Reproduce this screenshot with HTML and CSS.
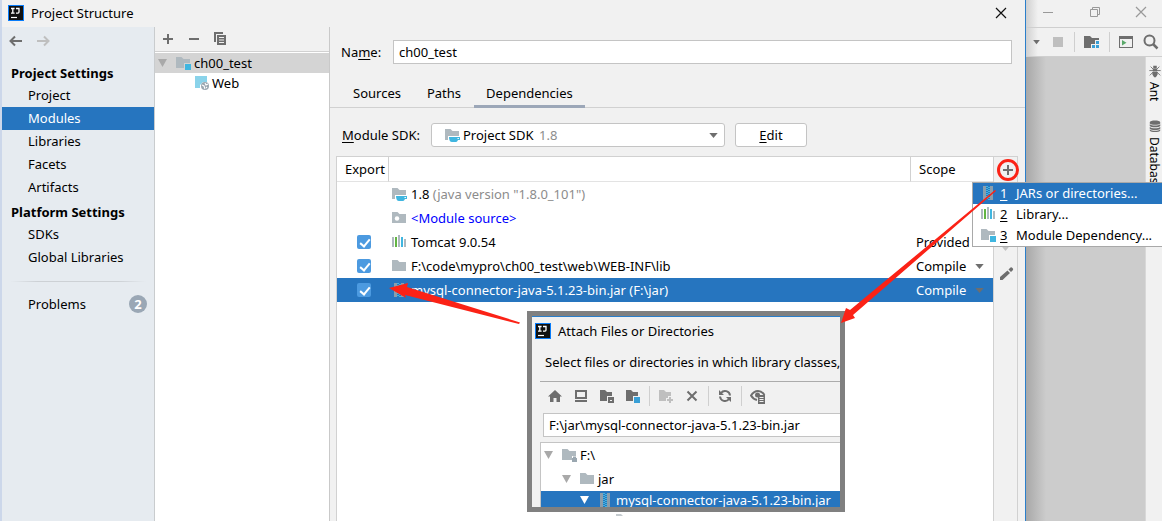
FILE: index.html
```
<!DOCTYPE html>
<html lang="en">
<head>
<meta charset="utf-8">
<title>Project Structure</title>
<link rel="stylesheet" href="styles.css">
</head>
<body>
<svg class="defs" aria-hidden="true">
  <symbol id="i-logo" viewBox="0 0 16 16"><rect width="16" height="16" fill="#087cfa"/><rect x="1" y="1" width="14" height="14" fill="#111"/><path d="M3 3.5h3.6M4.8 3.5v4.6M3 8.1h3.6M8 3.5h3v3.6q0 1-1 1H8" fill="none" stroke="#fff" stroke-width="1.3"/><path d="M3 12.5h6" stroke="#fff" stroke-width="1.2"/></symbol>
  <symbol id="i-folder" viewBox="0 0 16 16"><path d="M1 2h5.5l2 2H15v9H1z"/></symbol>
  <symbol id="i-module" viewBox="0 0 16 16"><path d="M1 2h5.5l2 2H15v4H9v5H1z"/><path d="M10 9h6v6h-6z" fill="#40b6e0"/></symbol>
  <symbol id="i-sdk" viewBox="0 0 16 16"><path d="M1 2h5.5l2 2H15v5H4v4H1z"/><path d="M5 10h11v3h-2c-1 2-2 2-2 2H8c-2 0-3-2-3-5z" fill="#40b6e0"/><path d="M13.5 11h1.4v1h-1.4z" fill="#fff"/></symbol>
  <symbol id="i-source" viewBox="0 0 16 16"><path d="M1 2h5.5l2 2H15v9H1z"/><circle cx="6" cy="8.5" r="2.2" fill="#fff"/></symbol>
  <symbol id="i-drive" viewBox="0 0 16 16"><path d="M1 2h5.5l2 2H15v5h-4v4H1z"/><path d="M11 11h5v4h-5zM12 11v-1.5h3V11" fill="#9aa7b0"/></symbol>
  <symbol id="i-lib" viewBox="0 0 16 16"><path d="M1 3h2v10H1zM7 1h2v12H7zM13 5h2v8h-2z"/><path d="M4 3h2v10H4z" fill="#62b543"/><path d="M10 3h2v10h-2z" fill="#40b6e0"/></symbol>
  <symbol id="i-jar" viewBox="0 0 16 16"><path d="M3 1h3v14H3zM10 1h3v14h-3z" fill="#8a9dac"/><path d="M6 1h2v1H6zM8 2h2v1H8zM6 3h2v1H6zM8 4h2v1H8zM6 5h2v1H6zM8 6h2v1H8zM6 7h2v1H6zM8 8h2v1H8zM6 9h2v1H6zM8 10h2v1H8zM6 11h2v1H6zM8 12h2v1H8zM6 13h2v1H6zM8 14h2v1H8z" fill="#40b6e0"/></symbol>
  <symbol id="i-web" viewBox="0 0 16 16"><path d="M1 1h12v6H9L6 10v3H1z" fill="#8ad3ea"/><circle cx="11" cy="11" r="4" fill="#9aa7b0"/><path d="M8 10l2 1 1 3M11 8l1 2 2-1M13 12l-1 1" stroke="#fff" stroke-width="1.1" fill="none"/></symbol>
  <symbol id="i-plus" viewBox="0 0 16 16"><path d="M7 3h2v4h4v2H9v4H7V9H3V7h4z"/></symbol>
  <symbol id="i-minus" viewBox="0 0 16 16"><path d="M3 7h10v2H3z"/></symbol>
  <symbol id="i-copy" viewBox="0 0 16 16"><path d="M2 1h9v2H4v8H2z"/><path fill-rule="evenodd" d="M5 4h9v10H5zM7 6v1h5V6zM7 8.5v1h5v-1zM7 11v1h5v-1z"/></symbol>
  <symbol id="i-back" viewBox="0 0 16 16"><path d="M14 8H3M7 3.5L2.500 8L7 12.500" fill="none" stroke="currentColor" stroke-width="2"/></symbol>
  <symbol id="i-fwd" viewBox="0 0 16 16"><path d="M2 8h11M9 3.500L13.500 8L9 12.500" fill="none" stroke="currentColor" stroke-width="2"/></symbol>
  <symbol id="i-tri" viewBox="0 0 10 10"><path d="M0 1h9L4.500 9z"/></symbol>
  <symbol id="i-close" viewBox="0 0 16 16"><path d="M3 3l10 10M13 3L3 13" fill="none" stroke="currentColor" stroke-width="1.200"/></symbol>
  <symbol id="i-pencil" viewBox="0 0 16 16"><path d="M2 11L9.500 4.500l2.500 2.500L4.500 14H2zM10.500 3.500L12.500 1.500q1-.5 2 .5t.5 2L13 6z"/></symbol>
</svg>

<div class="page">
  <section class="dialog" aria-label="Project Structure">
    <header class="titlebar">
      <svg class="icon"><use href="#i-logo"/></svg>
      <h1 class="title">Project Structure</h1>
      <button class="tool close" aria-label="Close"><svg class="icon"><use href="#i-close"/></svg></button>
    </header>
    <div class="body">
      <nav class="sidebar">
        <div class="history">
          <button class="tool" aria-label="Back"><svg class="icon"><use href="#i-back"/></svg></button>
          <button class="tool off" aria-label="Forward" disabled><svg class="icon"><use href="#i-fwd"/></svg></button>
        </div>
        <h2 class="group">Project Settings</h2>
        <a class="item" href="#">Project</a>
        <a class="item current" href="#" aria-current="page">Modules</a>
        <a class="item" href="#">Libraries</a>
        <a class="item" href="#">Facets</a>
        <a class="item" href="#">Artifacts</a>
        <h2 class="group">Platform Settings</h2>
        <a class="item" href="#">SDKs</a>
        <a class="item" href="#">Global Libraries</a>
        <hr class="rule">
        <a class="item" href="#">Problems<span class="count">2</span></a>
      </nav>

      <div class="modules">
        <div class="tree-tools">
          <button class="tool" aria-label="Add"><svg class="icon"><use href="#i-plus"/></svg></button>
          <button class="tool" aria-label="Remove"><svg class="icon"><use href="#i-minus"/></svg></button>
          <button class="tool" aria-label="Copy"><svg class="icon"><use href="#i-copy"/></svg></button>
        </div>
        <ul class="tree">
          <li class="node picked"><svg class="tri"><use href="#i-tri"/></svg><svg class="icon soft"><use href="#i-module"/></svg>ch00_test</li>
          <li class="node child"><svg class="icon soft"><use href="#i-web"/></svg>Web</li>
        </ul>
      </div>

      <main class="editor">
        <div class="name-row">
          <label class="name-label" for="name">Na<u>m</u>e:</label>
          <input class="field" id="name" type="text" value="ch00_test">
        </div>
        <div class="tabs" role="tablist">
          <button class="tab" role="tab">Sources</button>
          <button class="tab" role="tab">Paths</button>
          <button class="tab active" role="tab" aria-selected="true">Dependencies</button>
        </div>
        <div class="sdk-row">
          <label class="sdk-label" for="sdk"><u>M</u>odule SDK:</label>
          <div class="combo">
            <select class="combo-select" id="sdk"><option>Project SDK</option></select>
            <span class="combo-face"><svg class="icon soft"><use href="#i-sdk"/></svg><span class="version">1.8</span><svg class="caret" viewBox="0 0 10 6"><path d="M0 0h10L5 6z"/></svg></span>
          </div>
          <button class="edit"><u>E</u>dit</button>
        </div>

        <div class="deps">
          <div class="deps-list">
            <table class="table">
              <colgroup><col class="c-export"><col><col class="c-scope"></colgroup>
              <thead><tr><th scope="col">Export</th><th scope="col" aria-label="Dependency"></th><th scope="col">Scope</th></tr></thead>
              <tbody>
                <tr><td></td><td><div class="dep"><svg class="icon soft"><use href="#i-sdk"/></svg><span>1.8 <span class="dim">(java version "1.8.0_101")</span></span></div></td><td></td></tr>
                <tr><td></td><td><div class="dep"><svg class="icon soft"><use href="#i-source"/></svg><span class="own">&lt;Module source&gt;</span></div></td><td></td></tr>
                <tr><td><input class="check" type="checkbox" checked aria-label="Export Tomcat"></td><td><div class="dep"><svg class="icon soft"><use href="#i-lib"/></svg>Tomcat 9.0.54</div></td><td><select class="scope" aria-label="Scope of Tomcat"><option>Provided</option></select></td></tr>
                <tr><td><input class="check" type="checkbox" checked aria-label="Export lib"></td><td><div class="dep"><svg class="icon soft"><use href="#i-folder"/></svg>F:\code\mypro\ch00_test\web\WEB-INF\lib</div></td><td><div class="scope-cell"><select class="scope" aria-label="Scope of lib"><option>Compile</option></select><svg class="caret" viewBox="0 0 10 6"><path d="M0 0h10L5 6z"/></svg></div></td></tr>
                <tr class="selected"><td><input class="check" type="checkbox" checked aria-label="Export mysql"></td><td><div class="dep"><svg class="icon soft"><use href="#i-jar"/></svg>mysql-connector-java-5.1.23-bin.jar (F:\jar)</div></td><td><div class="scope-cell"><select class="scope" aria-label="Scope of mysql"><option>Compile</option></select><svg class="caret" viewBox="0 0 10 6"><path d="M0 0h10L5 6z"/></svg></div></td></tr>
              </tbody>
            </table>

            <section class="attach" aria-label="Attach Files or Directories">
              <header class="attach-title"><svg class="icon"><use href="#i-logo"/></svg>Attach Files or Directories</header>
              <p class="attach-text">Select files or directories in which library classes,</p>
              <div class="attach-main">
                <div class="attach-tools">
                  <button class="tool" aria-label="Home"><svg class="icon" viewBox="0 0 16 16"><path d="M8 2l7 6.500h-2V14H9.500v-4h-3v4H3V8.500H1z"/></svg></button>
                  <button class="tool" aria-label="Desktop"><svg class="icon" viewBox="0 0 16 16"><path fill-rule="evenodd" d="M2 2h12v9H2zM4 4v5h8V4zM2 12h12v2H2z"/></svg></button>
                  <button class="tool" aria-label="Project"><svg class="icon" viewBox="0 0 16 16"><path d="M1 2h5l2 2h5v4H8v5H1z"/><path fill-rule="evenodd" d="M9 9h6v6H9zM11 12v1h2v-1z"/></svg></button>
                  <button class="tool" aria-label="Module"><svg class="icon" viewBox="0 0 16 16"><path d="M1 2h5l2 2h5v4H8v5H1z"/><path d="M9 9h6v6H9z" fill="#389fd6"/></svg></button>
                  <span class="split"></span>
                  <button class="tool off" aria-label="New folder" disabled><svg class="icon" viewBox="0 0 16 16"><path d="M1 2h5l2 2h5v4h-3v2H8v3H1z"/><path d="M11 9h2v2h2v2h-2v2h-2v-2H9v-2h2z"/></svg></button>
                  <button class="tool" aria-label="Delete"><svg class="icon" viewBox="0 0 16 16"><path d="M3.500 3.500l9 9M12.500 3.500l-9 9" stroke="currentColor" stroke-width="2"/></svg></button>
                  <span class="split"></span>
                  <button class="tool" aria-label="Refresh"><svg class="icon" viewBox="0 0 16 16"><path d="M13 7.500A5 5 0 0 0 4 5M3 8.500A5 5 0 0 0 12 11" fill="none" stroke="currentColor" stroke-width="2"/><path d="M2 2v5h5zM14 14V9H9z"/></svg></button>
                  <span class="split"></span>
                  <button class="tool" aria-label="Show hidden"><svg class="icon" viewBox="0 0 16 16"><path d="M7 12Q3 11 1 7.500Q4 3 8 3t6.500 4" fill="none" stroke="currentColor" stroke-width="2"/><circle cx="7.500" cy="7" r="2.500"/><path fill-rule="evenodd" d="M8 7h7v9H8zM9.500 9v1h4V9zM9.500 11v1h4v-1zM9.500 13v1h4v-1z"/></svg></button>
                </div>
                <input class="field path" type="text" aria-label="Path" value="F:\jar\mysql-connector-java-5.1.23-bin.jar">
                <ul class="files">
                  <li class="file"><svg class="tri"><use href="#i-tri"/></svg><svg class="icon soft"><use href="#i-drive"/></svg>F:\</li>
                  <li class="file level2"><svg class="tri"><use href="#i-tri"/></svg><svg class="icon soft"><use href="#i-folder"/></svg>jar</li>
                  <li class="file level3"><svg class="tri"><use href="#i-tri"/></svg><svg class="icon soft"><use href="#i-jar"/></svg>mysql-connector-java-5.1.23-bin.jar</li>
                </ul>
              </div>
            </section>
          </div>

          <div class="side-tools">
            <button class="tool ringed" aria-label="Add dependency"><svg class="icon"><use href="#i-plus"/></svg></button>
            <button class="tool off" aria-label="Move down"><svg class="caret" viewBox="0 0 10 6"><path d="M0 0h10L5 6z"/></svg></button>
            <button class="tool" aria-label="Edit dependency"><svg class="icon"><use href="#i-pencil"/></svg></button>
            <div class="menu" role="menu">
              <button class="entry hot" role="menuitem"><svg class="icon soft"><use href="#i-jar"/></svg><u>1</u><span>JARs or directories...</span></button>
              <button class="entry" role="menuitem"><svg class="icon soft"><use href="#i-lib"/></svg><u>2</u><span>Library...</span></button>
              <button class="entry" role="menuitem"><svg class="icon soft"><use href="#i-module"/></svg><u>3</u><span>Module Dependency...</span></button>
            </div>
          </div>
        </div>
      </main>
    </div>
  </section>

  <aside class="ide">
    <div class="ide-title">
      <button class="tool" aria-label="Minimize"><svg class="icon" viewBox="0 0 16 16"><path d="M3 8h10v1H3z"/></svg></button>
      <button class="tool" aria-label="Restore"><svg class="icon" viewBox="0 0 16 16"><path d="M3.500 5.500h7v7h-7zM5.500 5.500v-2h7v7h-2" fill="none" stroke="currentColor"/></svg></button>
      <button class="tool" aria-label="Close window"><svg class="icon"><use href="#i-close"/></svg></button>
    </div>
    <div class="ide-tools">
      <svg class="caret" viewBox="0 0 10 6"><path d="M1 0h8L5 5z"/></svg>
      <button class="tool off" aria-label="Stop"><svg class="icon" viewBox="0 0 16 16"><path d="M3 3h10v10H3z"/></svg></button>
      <span class="split"></span>
      <button class="tool" aria-label="Project structure"><svg class="icon" viewBox="0 0 16 16"><path d="M0 2h6l2 2h7v2h-4v4H7v4H0z"/><path d="M12 7h3v3h-3zM8 11h3v3H8zM12 11h3v3h-3z" fill="#389fd6"/></svg></button>
      <span class="split"></span>
      <button class="tool" aria-label="Run"><svg class="icon" viewBox="0 0 16 16"><path fill-rule="evenodd" d="M1 2h14v12H1zM2 5v8h12V5z"/><path d="M4 6l4.500 2.800L4 11.500z" fill="#59a869"/></svg></button>
      <button class="tool" aria-label="Search"><svg class="icon" viewBox="0 0 16 16"><circle cx="6.500" cy="6.500" r="5" fill="none" stroke="currentColor" stroke-width="2"/><path d="M10 10l4.500 4.500" stroke="currentColor" stroke-width="2.500"/></svg></button>
    </div>
    <div class="ide-body">
      <div class="canvas"></div>
      <div class="stripe">
        <button class="vtab"><svg class="icon" viewBox="0 0 16 16"><path d="M6 2h4v3H6zM5.500 5.500h5v3h-5zM5 9h6v3l-2 3H7l-2-3z"/><path d="M3 3l3 3M13 3l-3 3M1.500 7.500h13M2 13l4-4M14 13l-4-4" stroke="currentColor" fill="none"/></svg>Ant</button>
        <button class="vtab"><svg class="icon" viewBox="0 0 16 16"><path d="M2 4c0-3 12-3 12 0v1c-1 2-11 2-12 0zM2 6c2 2 10 2 12 0v2c-1 2-11 2-12 0zM2 9c2 2 10 2 12 0v2c-1 2-11 2-12 0zM2 12c2 2 10 2 12 0v1c-1 2.500-11 2.500-12 0z"/></svg>Database</button>
      </div>
    </div>
  </aside>

  <svg class="arrows" viewBox="0 0 1162 521" aria-hidden="true">
    <path d="M389 288L408 283L407 287L520 322.500L519 324L405 295L406 298z"/>
    <path d="M995 190L996 191L853 315L855 318L841 323L846 308L850 310z"/>
    <path d="M616 514h5l2 2h-7z" fill="#c5cbcf"/>
  </svg>
</div>
</body>
</html>
```
FILE: styles.css
```
* { box-sizing: border-box; }

body {
  margin: 0;
  font: 13px/20px "Noto Sans", "Open Sans", sans-serif;
  color: #000;
  background: #f1f1f1;
}

button, input, select {
  font: inherit;
  color: inherit;
  margin: 0;
  padding: 0;
  border: 0;
  background: none;
}

h1, h2, p, ul { margin: 0; padding: 0; list-style: none; }
a { color: inherit; text-decoration: none; }
u { text-underline-offset: 2px; }

.defs { position: absolute; width: 0; height: 0; }
.icon { width: 16px; height: 16px; flex: none; display: block; fill: currentColor; }
.soft { fill: #afb9bf; }
.tri { width: 10px; height: 10px; flex: none; fill: #a9a9a9; }
.caret { width: 9px; height: 5px; flex: none; display: block; fill: #6e6e6e; }
.tool { color: #6e6e6e; display: flex; align-items: center; justify-content: center; flex: none; }
.off { color: #bfbfbf; }
.off .caret { fill: #c4c4c4; }
.split { width: 1px; height: 20px; background: #cfcfcf; flex: none; }

.page { position: relative; display: flex; min-height: 100vh; overflow: hidden; }

/* Project structure dialog */
.dialog {
  flex: 1;
  min-width: 0;
  display: flex;
  flex-direction: column;
  border-left: 2px solid #ccd7ea;
  border-right: 1px solid #2b7fcb;
  background: #f1f1f1;
}
.titlebar { display: flex; align-items: center; gap: 7px; height: 27px; padding: 0 16px 2px 6px; }
.title { flex: 1; font-size: 13px; font-weight: 400; }
.close { color: #111; }
.body { flex: 1; display: flex; }

.sidebar { width: 153px; flex: none; background: #e6ebf0; border-right: 1px solid #c9ccce; }
.history { display: flex; gap: 11px; height: 34px; padding: 6px 0 12px 6px; }
.group { padding: 2px 0 0 9px; font-size: 13px; line-height: 21px; font-weight: 700; }
.item { display: flex; align-items: center; height: 23px; padding: 0 7px 2px 26px; }
.item + .group { margin-top: 1px; }
.current { background: #2675bf; color: #fff; }
.rule { height: 1px; margin: 12px 8px 11px; border: 0; background: linear-gradient(90deg, transparent, #cdd1d5 20%, #cdd1d5 80%, transparent); }
.count { width: 18px; height: 18px; margin-left: auto; border-radius: 9px; background: #9aa7b5; color: #fff; font-weight: 700; line-height: 18px; text-align: center; }

.modules { width: 175px; flex: none; display: flex; flex-direction: column; border-right: 1px solid #c9c9c9; }
.tree-tools { display: flex; gap: 10px; height: 25px; padding: 0 5px; border-bottom: 1px solid #d1d1d1; }
.tree { flex: 1; padding-top: 1px; background: #fff; }
.node { display: flex; align-items: center; gap: 3px; height: 20px; padding-left: 3px; }
.node .tri { margin-right: 4px; }
.picked { background: #d4d4d4; }
.child { padding-left: 39px; gap: 2px; }

.editor { flex: 1; min-width: 0; display: flex; flex-direction: column; padding-top: 13px; }
.name-row { display: flex; align-items: center; padding: 0 13px 0 11px; }
.name-label { width: 52px; flex: none; }
.field { flex: 1; min-width: 0; height: 24px; padding: 0 5px; border: 1px solid #c4c4c4; background: #fff; }
.tabs { display: flex; height: 29px; margin-top: 15px; padding-left: 10px; border-bottom: 1px solid #d1d1d1; }
.tab { height: 29px; padding: 2px 13px 0; border-bottom: 3px solid transparent; }
.active { padding: 2px 12px 0; border-bottom-color: #9ca7b8; }
.sdk-row { display: flex; align-items: center; margin-top: 15px; padding-left: 12px; }
.sdk-label { width: 89px; flex: none; }
.combo { display: grid; width: 294px; height: 24px; }
.combo > * { grid-area: 1 / 1; }
.combo-select { appearance: none; padding-left: 31px; border: 1px solid #c4c4c4; border-radius: 3px; background: #fff; }
.combo-face { display: flex; align-items: center; padding: 0 7px 0 13px; pointer-events: none; z-index: 1; }
.version { flex: 1; padding-left: 79px; color: #8c8c8c; }
.edit { width: 72px; height: 24px; margin-left: 10px; border: 1px solid #c4c4c4; border-radius: 3px; background: #fff; }

/* Dependency list */
.deps { flex: 1; display: flex; margin: 9px 7px 0 6px; border: 1px solid #d1d1d1; border-bottom: 0; }
.deps-list { position: relative; flex: 1; min-width: 0; background: #fff; }
.table { width: 100%; table-layout: fixed; border-collapse: separate; border-spacing: 0; }
.c-export { width: 51px; }
.c-scope { width: 83px; }
.table th { height: 25px; padding: 0 0 0 8px; border-bottom: 1px solid #e3e3e3; font-weight: 400; text-align: left; }
.table th + th { border-left: 1px solid #d1d1d1; }
.table td { height: 24px; padding: 0 0 0 3px; white-space: nowrap; }
.table td:first-child { padding: 0 0 1px 20px; }
.table td:last-child { padding-left: 6px; }
.dep { display: flex; align-items: center; gap: 4px; }
.dim { color: #8c8c8c; }
.own { color: #00f; }
.selected { background: #2675bf; color: #fff; }
.check { display: block; appearance: none; width: 14px; height: 14px; border-radius: 2px; background: #4c9ae0; position: relative; }
.check::after { content: ""; position: absolute; left: 5px; top: 2px; width: 4px; height: 8px; border: solid #fff; border-width: 0 2px 2px 0; transform: rotate(40deg); }
.scope { appearance: none; display: block; width: 59px; height: 20px; }
.scope-cell { display: flex; align-items: center; }
.side-tools { position: relative; width: 24px; flex: none; display: flex; flex-direction: column; align-items: center; border-left: 1px solid #d1d1d1; }
.ringed { width: 22px; height: 22px; margin: 2px 0 65px 4px; border: 3px solid #fb2216; border-radius: 50%; }
.side-tools .tool:nth-child(3) { margin-top: 15px; }

.menu { position: absolute; left: -22px; top: 25px; z-index: 2; width: 190px; border: 1px solid #a9a9a9; border-right: 0; background: #fff; }
.entry { display: flex; align-items: center; width: 100%; height: 21px; padding: 0 0 1px 7px; gap: 4px; text-align: left; white-space: nowrap; }
.entry u { width: 12px; }
.hot { background: #2675bf; color: #fff; }

/* Attach dialog */
.attach { position: absolute; left: 190px; top: 154px; z-index: 1; width: 318px; height: 201px; overflow: hidden; border: 5px solid #808080; background: #f1f1f1; white-space: nowrap; }
.attach-title { display: flex; align-items: center; gap: 7px; height: 30px; padding: 0 0 2px 3px; border-top: 1px solid #2b7fcb; }
.attach-text { padding: 6px 0 9px 13px; }
.attach-main { display: flex; flex-direction: column; margin-left: 8px; border-top: 1px solid #ababab; }
.attach-tools { display: flex; align-items: center; gap: 10px; height: 31px; padding: 0 0 3px 7px; }
.attach-tools .split { margin: 0 -2px; }
.path { flex: none; margin: 0 0 5px 3px; border-right: 0; }
.files { border: 1px solid #c4c4c4; border-right: 0; background: #fff; }
.file { display: flex; align-items: center; height: 24px; padding-left: 3px; gap: 3px; }
.file .tri { margin-right: 4px; }
.level2 { padding-left: 21px; }
.level3 { height: 21px; padding: 0 0 4px 39px; background: #2675bf; color: #fff; }
.level3 .tri { fill: #fff; }

/* Host window */
.ide { width: 136px; flex: none; display: flex; flex-direction: column; background: linear-gradient(90deg, #d0d0d0, #f1f1f1 12px); }
.ide-title { display: flex; justify-content: space-between; height: 28px; padding: 0 13px 4px 14px; border-bottom: 1px solid #cfcfcf; }
.ide-title .tool { color: #999; }
.ide-tools { display: flex; align-items: center; gap: 8px; height: 29px; padding: 0 3px 0 6px; border-bottom: 1px solid #cfcfcf; justify-content: space-between; }
.ide-body { flex: 1; display: flex; }
.canvas { flex: 1; background: linear-gradient(90deg, #a8a8a8, #ccc 20px); }
.stripe { width: 17px; flex: none; display: flex; flex-direction: column; gap: 17px; padding-top: 6px; border-left: 1px solid #d8d8d8; background: #f1f1f1; }
.vtab { writing-mode: vertical-rl; display: flex; align-items: center; gap: 3px; width: 16px; font-size: 12px; line-height: 16px; }
.vtab .icon { width: 14px; color: #6e6e6e; margin-left: 2px; }

.arrows { position: absolute; left: 0; top: 0; z-index: 3; width: 1162px; height: 521px; fill: #fb2216; pointer-events: none; }
```
